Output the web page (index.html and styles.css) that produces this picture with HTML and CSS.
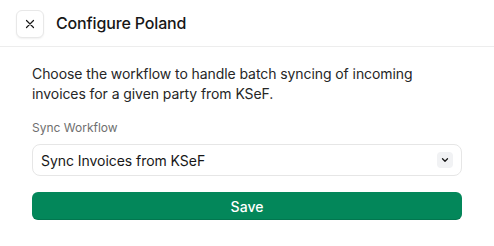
FILE: index.html
```html
<!DOCTYPE html>
<html>
<head>
<meta charset="utf-8">
<link rel="stylesheet" href="styles.css">
</head>
<body>
<div class="dialog">
  <div class="header">
    <button class="close" aria-label="Close">
      <svg width="12" height="12" viewBox="0 0 12 12"><path d="M2.5 2.5 L9.5 9.5 M9.5 2.5 L2.5 9.5" stroke="#171717" stroke-width="1.2" stroke-linecap="round" fill="none"/></svg>
    </button>
    <h1 class="title">Configure Poland</h1>
  </div>
  <div class="body">
    <p class="desc">Choose the workflow to handle batch syncing of incoming invoices for a given party from KSeF.</p>
    <label class="label">Sync Workflow</label>
    <div class="select">
      <span class="select-text">Sync Invoices from KSeF</span>
      <span class="chev">
        <svg width="10" height="10" viewBox="0 0 10 10"><path d="M2.5 3.8 L5 6.3 L7.5 3.8" stroke="#171717" stroke-width="1.3" stroke-linecap="round" stroke-linejoin="round" fill="none"/></svg>
      </span>
    </div>
    <button class="save">Save</button>
  </div>
</div>
</body>
</html>
```
FILE: styles.css
```css
html, body {
  margin: 0;
  padding: 0;
  background: #ffffff;
}
body {
  font-family: Inter, "Liberation Sans", sans-serif;
  color: #171717;
  width: 494px;
  height: 246px;
  overflow: hidden;
}
.dialog {
  display: flex;
  flex-direction: column;
}
.header {
  display: flex;
  align-items: center;
  gap: 12px;
  height: 46px;
  padding: 0 16px;
  border-bottom: 1px solid #ededed;
}
.close {
  width: 28px;
  height: 28px;
  margin-top: 1px;
  padding: 0;
  display: flex;
  align-items: center;
  justify-content: center;
  background: #fff;
  border: 1px solid #e8e8e8;
  border-radius: 6px;
  box-shadow: 0 1px 2px rgba(0,0,0,0.06);
  cursor: pointer;
}
.title {
  margin: 0;
  font-size: 16px;
  font-weight: 500;
  color: #171717;
  letter-spacing: -0.15px;
}
.body {
  display: flex;
  flex-direction: column;
  padding: 17px 32px 0;
}
.desc {
  margin: 0;
  font-size: 14px;
  line-height: 20px;
  color: #262626;
  letter-spacing: -0.08px;
}
.label {
  margin-top: 16px;
  font-size: 12px;
  line-height: 16px;
  color: #6f6f6f;
}
.select {
  margin-top: 8px;
  height: 32px;
  box-sizing: border-box;
  border: 1px solid #e6e6e6;
  border-radius: 8px;
  display: flex;
  align-items: center;
  justify-content: space-between;
  padding: 0 8px 0 8px;
  font-size: 14px;
  color: #171717;
  letter-spacing: -0.05px;
}
.chev {
  width: 16px;
  height: 16px;
  border-radius: 4px;
  background: #f1f2f4;
  display: flex;
  align-items: center;
  justify-content: center;
}
.save {
  margin-top: 16px;
  height: 28px;
  border: none;
  border-radius: 6px;
  background: #03875a;
  box-shadow: inset 0 -1px 0 rgba(0,0,0,0.12);
  color: #ffffff;
  font-family: Inter, "Liberation Sans", sans-serif;
  font-size: 14px;
  font-weight: 500;
  padding: 0;
}
```
